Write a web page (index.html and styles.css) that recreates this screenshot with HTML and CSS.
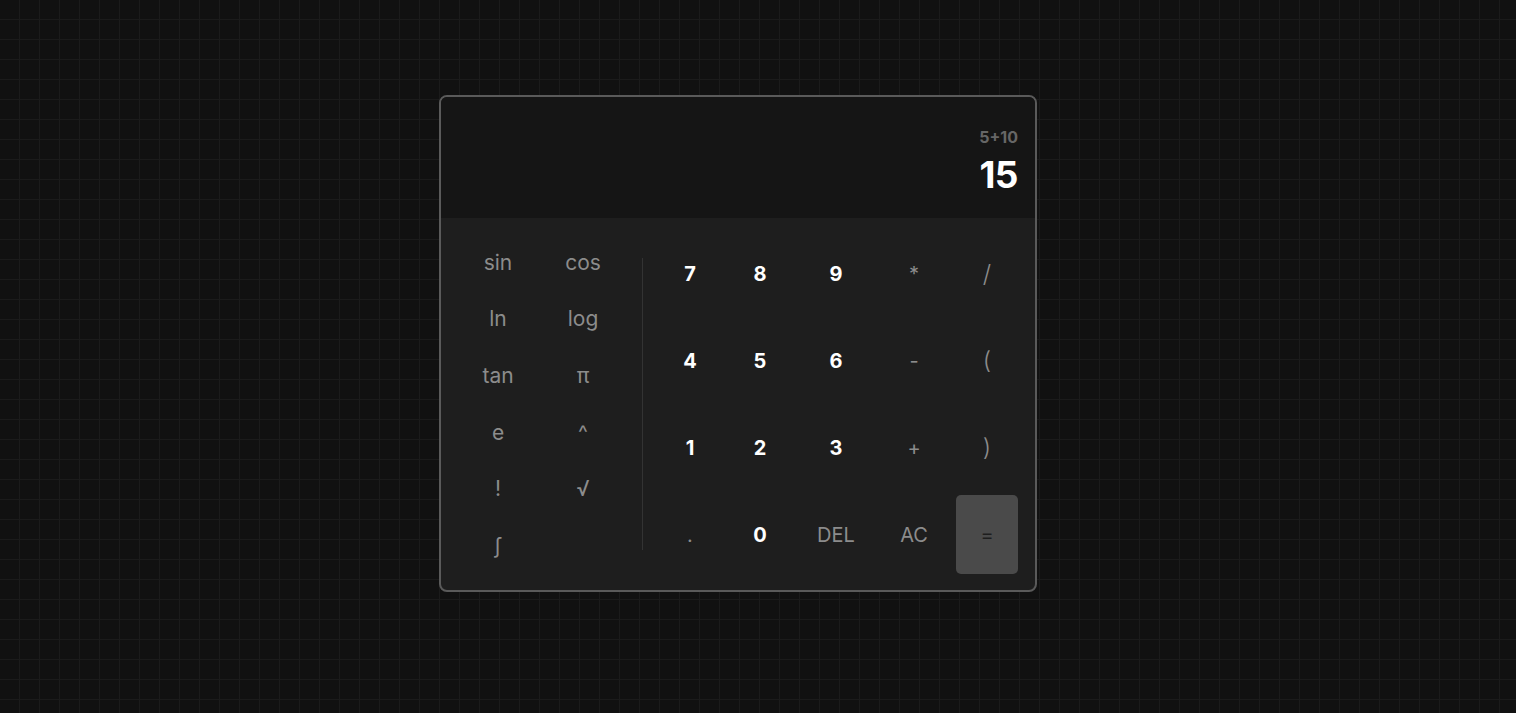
FILE: index.html
```html
<!DOCTYPE html>
<html lang="en">
<head>
<meta charset="utf-8">
<title>Calculator</title>
<link rel="stylesheet" href="styles.css">
</head>
<body>
<main class="calc">
  <section class="display">
    <div class="expr">5+10</div>
    <div class="result">15</div>
  </section>
  <section class="keypad">
    <div class="funcs">
      <button class="fn">sin</button>
      <button class="fn">cos</button>
      <button class="fn">ln</button>
      <button class="fn">log</button>
      <button class="fn">tan</button>
      <button class="fn">π</button>
      <button class="fn">e</button>
      <button class="fn">^</button>
      <button class="fn">!</button>
      <button class="fn">√</button>
      <button class="fn">∫</button>
    </div>
    <div class="divider"></div>
    <div class="keys">
      <button class="num">7</button>
      <button class="num">8</button>
      <button class="num">9</button>
      <button class="op">*</button>
      <button class="op tall">/</button>
      <button class="num">4</button>
      <button class="num">5</button>
      <button class="num">6</button>
      <button class="op">-</button>
      <button class="op tall">(</button>
      <button class="num">1</button>
      <button class="num">2</button>
      <button class="num">3</button>
      <button class="op">+</button>
      <button class="op tall">)</button>
      <button class="op">.</button>
      <button class="num">0</button>
      <button class="op">DEL</button>
      <button class="op">AC</button>
      <button class="eq">=</button>
    </div>
  </section>
</main>
</body>
</html>
```
FILE: styles.css
```css
html, body {
  margin: 0;
  height: 100%;
}
body {
  background-color: #111111;
  background-image:
    linear-gradient(to right, transparent 19px, #1b1b1b 19px),
    linear-gradient(to bottom, transparent 19px, #1b1b1b 19px);
  background-size: 20px 20px;
  display: flex;
  align-items: center;
  justify-content: center;
  box-sizing: border-box;
  padding: 0 40px 26px 0;
  font-family: "Inter", "Open Sans", sans-serif;
}
.calc {
  width: 598px;
  box-sizing: border-box;
  border: 2px solid #5a5a5a;
  border-radius: 8px;
  overflow: hidden;
  background: #1e1e1e;
}
.display {
  height: 121px;
  box-sizing: border-box;
  background: #151515;
  padding: 28px 17px 0 0;
  display: flex;
  flex-direction: column;
  align-items: flex-end;
  gap: 4px;
}
.expr {
  color: #666666;
  font-size: 16px;
  font-weight: 700;
  line-height: 24px;
}
.result {
  color: #ffffff;
  font-size: 37px;
  font-weight: 700;
  line-height: 44px;
  letter-spacing: -0.5px;
}
.keypad {
  display: flex;
  align-items: center;
  padding: 16px 17px 16px 18px;
}
button {
  font-family: inherit;
  border: 0;
  background: transparent;
  padding: 0;
  cursor: pointer;
}
.funcs {
  display: grid;
  grid-template-columns: 78px 78px;
  grid-template-rows: repeat(6, 1fr);
  column-gap: 7px;
  height: 340px;
}
.fn {
  color: #8c8c8c;
  font-size: 21px;
  font-weight: 400;
}
.divider {
  width: 1px;
  height: 292px;
  background: #333333;
  margin: 0 17px 0 20px;
}
.keys {
  display: grid;
  grid-template-columns: 60px 64px 72px 68px 62px;
  grid-template-rows: repeat(4, 79px);
  gap: 8px;
}
.num {
  color: #ffffff;
  font-size: 20px;
  font-weight: 700;
}
.op {
  color: #8c8c8c;
  font-size: 20px;
  font-weight: 400;
}
.op.tall {
  font-size: 24px;
  font-weight: 300;
}
.eq {
  background: #4a4a4a;
  border-radius: 5px;
  color: #1e1e1e;
  font-size: 20px;
}
```
